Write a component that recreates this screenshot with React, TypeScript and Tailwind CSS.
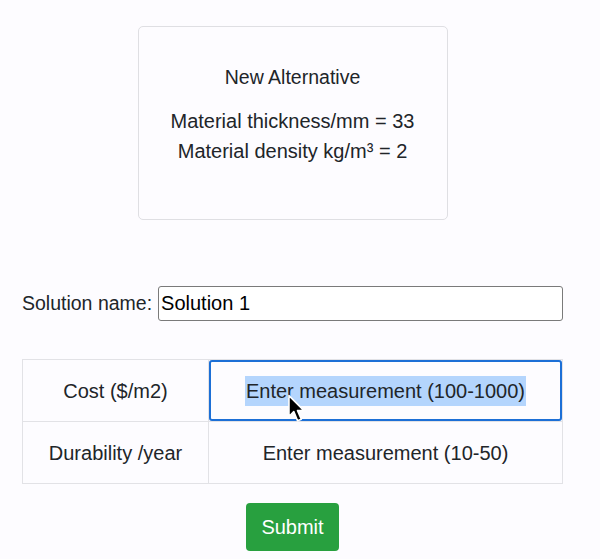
export default function App() {
  return (
    <main className="min-h-[559px] w-[600px] bg-[#fdfcff] text-[#212529] [font-family:'Liberation_Sans',Arial,sans-serif]">
      <div className="flex w-[585px] flex-col items-center">
        <section className="mt-[26px] flex h-[194px] w-[310px] flex-col items-center justify-center rounded-[5px] border border-[#dfdfe3] bg-[#fdfcff] pb-[16px] text-[#212529]">
          <h2 className="text-[19.5px] leading-[26px]">New Alternative</h2>
          <div className="mt-[16px] text-center text-[20px] leading-[30px]">
            <p>Material thickness/mm = 33</p>
            <p>Material density kg/m³ = 2</p>
          </div>
        </section>

        <div className="mt-[66px] flex w-full items-center px-[22px]">
          <label className="mr-[6px] text-[19.5px]">Solution name:</label>
          <input
            defaultValue="Solution 1"
            className="h-[35px] w-[405px] rounded-[3px] border border-[#7a7a7a] bg-white px-[2px] text-[20px] text-black outline-none"
          />
        </div>

        <table className="mt-[38px] w-[541px] border-collapse text-[20px]">
          <tbody>
            <tr className="h-[62px]">
              <td className="w-[186px] border border-[#e2e2e6] text-center">Cost ($/m2)</td>
              <td className="relative border border-[#e2e2e6] p-0">
                <div className="flex h-[61px] items-center justify-center rounded-[3px] border-2 border-[#1c6fd6]">
                  <span className="bg-[#b4d5fd] px-[1px] leading-[30px]">Enter measurement (100-1000)</span>
                </div>
                <svg className="absolute left-[78px] top-[34px]" width="20" height="30" viewBox="0 0 18 28">
                  <path
                    d="M1.5 1.5 L1.5 21 L6 16.5 L9.5 25 L13 23.5 L9.5 15.5 L15.5 15.5 Z"
                    fill="#000"
                    stroke="#fff"
                    strokeWidth="1.5"
                    strokeLinejoin="round"
                  />
                </svg>
              </td>
            </tr>
            <tr className="h-[62px]">
              <td className="border border-[#e2e2e6] text-center">Durability /year</td>
              <td className="border border-[#e2e2e6] text-center">Enter measurement (10-50)</td>
            </tr>
          </tbody>
        </table>

        <button className="mt-[19px] h-[48px] w-[93px] rounded-[4px] bg-[#28a03f] text-[20px] text-white">
          Submit
        </button>
      </div>
    </main>
  );
}
